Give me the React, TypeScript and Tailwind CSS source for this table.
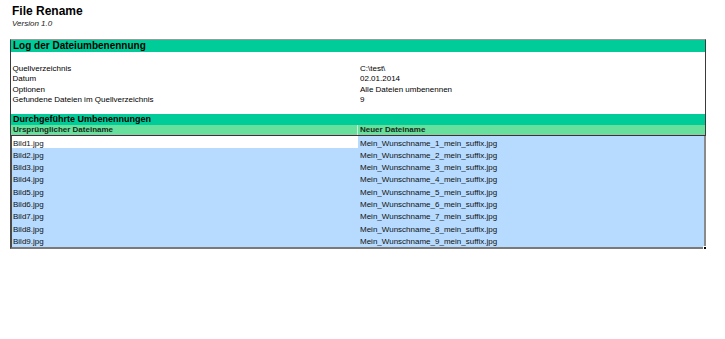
const info = [
  ["Quellverzeichnis", "C:\\test\\"],
  ["Datum", "02.01.2014"],
  ["Optionen", "Alle Dateien umbenennen"],
  ["Gefundene Dateien im Quellverzeichnis", "9"],
];

const files = Array.from({ length: 9 }, (_, i) => ({
  from: `Bild${i + 1}.jpg`,
  to: `Mein_Wunschname_${i + 1}_mein_suffix.jpg`,
}));

export default function App() {
  return (
    <div className="h-[339px] w-[725px] bg-white font-['Liberation_Sans',Arial,sans-serif] text-black">
      <div className="pl-[12px] pt-[4px]">
        <div className="text-[12px] font-bold leading-[14px]">File Rename</div>
        <div className="mt-[1px] text-[8px] italic leading-[10px] text-[#222]">Version 1.0</div>
      </div>

      <div className="ml-[10px] mt-[10px] w-[696px]">
        {/* log header + summary */}
        <div className="border-x border-t border-l-[#3a3a3a] border-r-[#3a3a3a] border-t-[#9a9a9a]">
          <div className="h-[12px] bg-[#00cc99] pl-[2px] text-[10px] font-bold leading-[12px]">
            Log der Dateiumbenennung
          </div>
          <div className="h-[62px] pt-[10.5px]">
            {info.map(([k, v]) => (
              <div key={k} className="flex h-[10.5px] text-[8px] leading-[11px]">
                <div className="w-[347px] pl-[1.5px]">{k}</div>
                <div className="pl-[2px]">{v}</div>
              </div>
            ))}
          </div>
          <div className="h-[11px] bg-[#00cc99] pl-[2px] text-[9px] font-bold leading-[11px]">
            Durchgeführte Umbenennungen
          </div>
          <div className="flex h-[10px] bg-[#66e09c] text-[8px] font-bold leading-[10px] text-[#1a2a1a]">
            <div className="w-[347px] border-r border-[#c8f0d8] pl-[2px]">Ursprünglicher Dateiname</div>
            <div className="pl-[2px]">Neuer Dateiname</div>
          </div>
          <div className="h-[1px] bg-[#5e2040]" />
        </div>

        {/* renamed files, selected range */}
        <div className="relative border-b-2 border-l-2 border-r-2 border-b-[#7a7a7a] border-l-[#4a4a4a] border-r-[#8a8a8a] bg-[#b7dbff]">
          {files.map((f, i) => (
            <div key={f.from} className="flex h-[12.3px] text-[8px] leading-[12.3px] text-[#111]">
              <div className={`w-[346px] pl-[1px] pt-[1.5px] ${i === 0 ? "bg-white" : ""}`}>{f.from}</div>
              <div className="pl-[2px] pt-[1.5px]">{f.to}</div>
            </div>
          ))}
          <div className="absolute -bottom-[3px] -right-[3px] h-[4px] w-[4px] border border-white bg-black" />
        </div>
      </div>
    </div>
  );
}
